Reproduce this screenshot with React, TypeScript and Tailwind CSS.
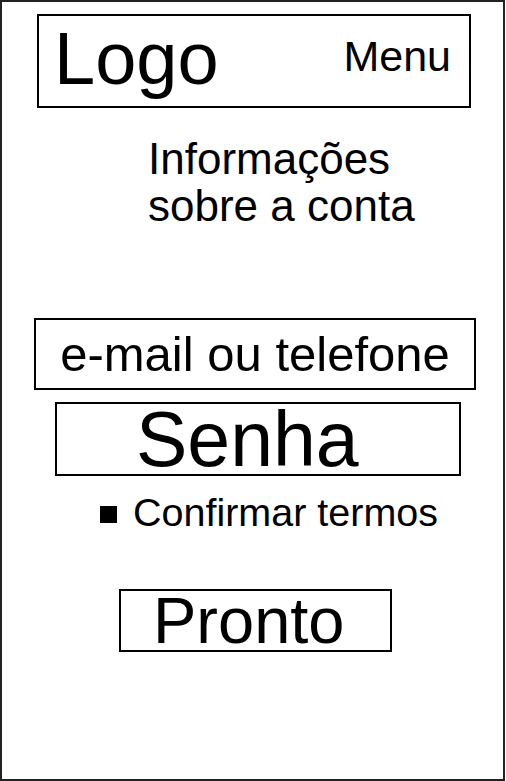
export default function App() {
  return (
    <div
      className="w-[505px] h-[781px] border-2 border-[#222] bg-white text-black flex flex-col items-start"
      style={{ fontFamily: '"Liberation Sans", Arial, sans-serif' }}
    >
      {/* Header */}
      <div className="ml-[35px] mt-[12px] w-[434px] h-[94px] border-2 border-black flex items-start justify-between">
        <span className="pl-[15px] pt-[6px] text-[74px] leading-none">Logo</span>
        <span className="pr-[18px] pt-[19px] text-[43px] leading-none">Menu</span>
      </div>

      {/* Title */}
      <h1 className="ml-[146px] mt-[27px] text-[44px] leading-[47px] font-normal">
        Informações
        <br />
        sobre a conta
      </h1>

      {/* Email */}
      <div className="ml-[32px] mt-[89px] w-[442px] h-[72px] border-2 border-black flex items-center justify-center">
        <span className="text-[49px] leading-none">e-mail ou telefone</span>
      </div>

      {/* Password */}
      <div className="ml-[53px] mt-[12px] w-[406px] h-[74px] border-2 border-black flex items-center pl-[79px]">
        <span className="text-[77px] leading-none">Senha</span>
      </div>

      {/* Terms */}
      <div className="ml-[98px] mt-[17px] flex items-start gap-4">
        <div className="mt-[13px] w-[17px] h-[17px] bg-black" />
        <span className="text-[39.5px] leading-none">Confirmar termos</span>
      </div>

      {/* Done */}
      <button className="ml-[117px] mt-[56px] w-[273px] h-[63px] border-2 border-black flex items-center pl-[32px]">
        <span className="text-[65px] leading-none">Pronto</span>
      </button>
    </div>
  );
}
